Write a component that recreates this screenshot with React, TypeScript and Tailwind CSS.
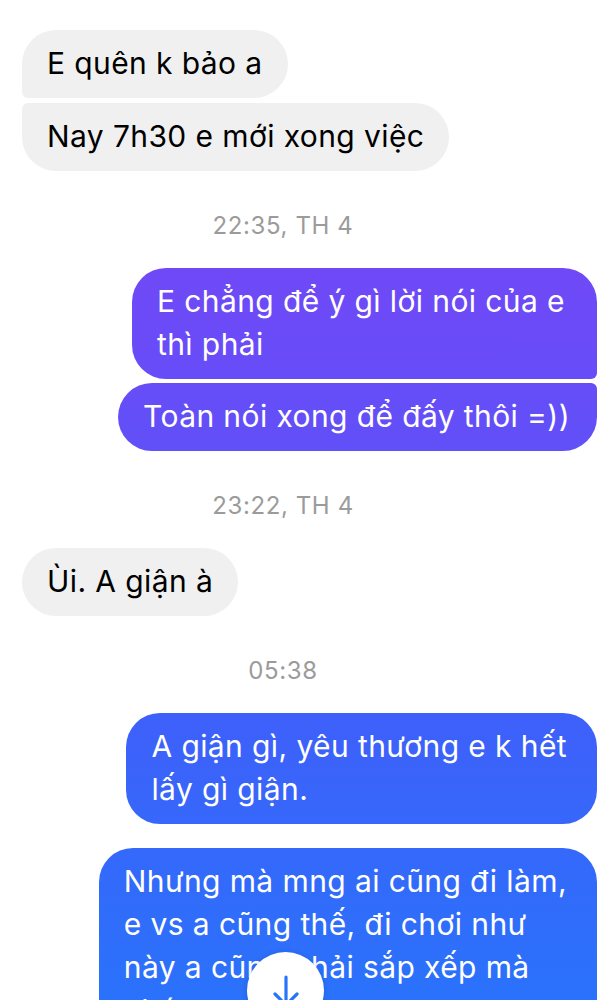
const font = "font-['Inter','Noto_Sans',sans-serif]"

function Stamp({ text }: { text: string }) {
    return (
        <div className="mt-[41px] mb-[28px] pr-[53px] text-center text-[24px] leading-[28px] tracking-[0.6px] text-[#9b9b9b]">{text}</div>
    )
}

export default function App() {
    const grad = "bg-[linear-gradient(180deg,#8240f6_0px,#7049f7_270px,#6050f8_460px,#3e60fa_715px,#2a72fb_1000px)] bg-fixed"

    return (
        <div className={`relative h-[1000px] w-full overflow-hidden bg-white ${font}`}>
            <div className="flex flex-col pt-[30px] pl-[22px] pr-[14px] text-[30px] leading-[43px] tracking-[0.4px]">
                <div className="flex flex-col items-start gap-[5px]">
                    <div className="rounded-[34px] rounded-bl-[6px] bg-[#f0f0f0] px-[25px] pt-[12px] pb-[13px] text-black">E quên k bảo a</div>
                    <div className="rounded-[34px] rounded-tl-[6px] bg-[#f0f0f0] px-[25px] pt-[12px] pb-[13px] text-black">Nay 7h30 e mới xong việc</div>
                </div>

                <Stamp text="22:35, TH 4" />

                <div className="flex flex-col items-end gap-[4px]">
                    <div className={`rounded-[34px] rounded-br-[6px] ${grad} pl-[25px] pr-[32px] pt-[12px] pb-[13px] text-white`}>
                        E chẳng để ý gì lời nói của e<br />thì phải
                    </div>
                    <div className={`rounded-[34px] rounded-tr-[6px] ${grad} pl-[25px] pr-[27px] pt-[12px] pb-[13px] text-white`}>
                        Toàn nói xong để đấy thôi =))
                    </div>
                </div>

                <Stamp text="23:22, TH 4" />

                <div className="flex flex-col items-start">
                    <div className="rounded-[34px] bg-[#f0f0f0] px-[25px] pt-[12px] pb-[13px] text-black">Ùi. A giận à</div>
                </div>

                <Stamp text="05:38" />

                <div className="flex flex-col items-end gap-[24px]">
                    <div className={`rounded-[34px] ${grad} pl-[25px] pr-[30px] pt-[12px] pb-[13px] text-white`}>
                        A giận gì, yêu thương e k hết<br />lấy gì giận.
                    </div>
                    <div className={`rounded-[34px] ${grad} pl-[25px] pr-[30px] pt-[12px] pb-[13px] text-white`}>
                        Nhưng mà mng ai cũng đi làm,<br />e vs a cũng thế, đi chơi như<br />này a cũng phải sắp xếp mà<br />chứ
                    </div>
                </div>
            </div>

            <div className="absolute left-[247px] top-[952px] flex h-[77px] w-[77px] items-start justify-center rounded-full bg-white pt-[22px] shadow-[0_1px_6px_rgba(0,0,0,0.15)]">
                <svg width="30" height="36" viewBox="0 0 30 36" fill="none" stroke="#2a74fb" strokeWidth="3.2" strokeLinecap="round" strokeLinejoin="round">
                    <path d="M15 3v28" />
                    <path d="M4 20l11 11 11-11" />
                </svg>
            </div>
        </div>
    )
}
